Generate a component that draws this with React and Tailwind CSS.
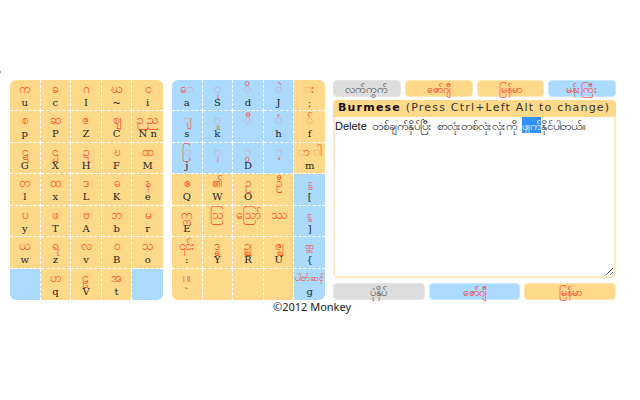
const amber = 'bg-[#ffd98a]'
const blue = 'bg-[#aadbff]'

const leftKeys = [
    ['က', 'u'], ['ခ', 'c'], ['ဂ', 'I'], ['ဃ', '~'], ['င', 'i'],
    ['စ', 'p'], ['ဆ', 'P'], ['ဇ', 'Z'], ['ဈ', 'C'], ['ဉ ည', 'N n'],
    ['ဋ', 'G'], ['ဌ', 'X'], ['ဍ', 'H'], ['ဎ', 'F'], ['ဏ', 'M'],
    ['တ', 'l'], ['ထ', 'x'], ['ဒ', 'L'], ['ဓ', 'K'], ['န', 'e'],
    ['ပ', 'y'], ['ဖ', 'T'], ['ဗ', 'A'], ['ဘ', 'b'], ['မ', 'r'],
    ['ယ', 'w'], ['ရ', 'z'], ['လ', 'v'], ['ဝ', 'B'], ['သ', 'o'],
    ['', '', blue], ['ဟ', 'q'], ['ဠ', 'V'], ['အ', 't'], ['', '', blue],
]

const rightKeys = [
    ['ေ', 'a', blue], ['ု', 'S', blue], ['ိ', 'd', blue], ['ဲ', 'J', blue], ['း', ';'],
    ['ျ', 's', blue], ['ူ', 'k', blue], ['ီ', '', blue], ['ံ', 'h', blue], ['်', 'f'],
    ['ြ', 'j', blue], ['ှ', '', blue], ['ွ', 'D', blue], ['့', '', blue], ['ာ ါ', 'm'],
    ['ဧ', 'Q'], ['၏', 'W'], ['ဥ', 'O'], ['ဦ', ''], ['ဋ္ဌ', '[', blue],
    ['ဣ', 'E'], ['ဩ', ''], ['ဪ', ''], ['ဿ', ''], ['ဋ္ဋ', ']', blue],
    ['၎င်း', ':'], ['ဒ္ဓ', 'Y'], ['ဉ္ဈ', 'R'], ['ဇ္ဈ', 'U'], ['ဏ္ဏ', '{', blue],
    ['၊ ။', '`'], ['', ''], ['', ''], ['', ''], ['ပါတ်ဆင့်', 'g', blue],
]

const Keyboard = ({ keys }) => (
    <div className="grid w-[153px] h-[220px] grid-cols-5 grid-rows-7 rounded-[6px] overflow-hidden">
        {keys.map(([top, bottom, bg], i) => (
            <div
                key={i}
                className={`${bg || amber} flex flex-col items-center pt-[1px] border-white border-dashed ${i % 5 < 4 ? 'border-r' : ''} ${i < 30 ? 'border-b' : ''}`}
            >
                <span className={`h-[16px] leading-[16px] whitespace-nowrap text-[#ff3a1c] ${top.length > 6 ? 'text-[9px]' : top.length === 3 && bg ? 'text-[9px]' : 'text-[12px]'}`}>{top}</span>
                <span className="h-[12px] leading-[12px] whitespace-pre text-[10px] text-[#222] font-['DejaVu_Serif',serif]">{bottom}</span>
            </div>
        ))}
    </div>
)

const Button = ({ bg, children, color = 'text-[#ff2a1c]', border = 'border-[#ffe6ae]' }) => (
    <div className={`${bg} ${color} ${border} flex-1 h-[17px] border rounded-[4px] flex items-center justify-center text-[11px] leading-none`}>
        {children}
    </div>
)

export default function App() {
    return (
        <div className="relative w-[640px] h-[400px] bg-white pt-[80px] pl-[10px] font-['Noto_Sans',sans-serif]">
            <div className="absolute left-0 top-[71px] w-px h-[2px] bg-gray-400" />
            <div className="flex items-start">
                <Keyboard keys={leftKeys} />
                <div className="ml-[9px]">
                    <Keyboard keys={rightKeys} />
                </div>
                <div className="ml-[8px] w-[283px] h-[220px] flex flex-col">
                    <div className="flex gap-[4px]">
                        <Button bg="bg-[#dddddd]" color="text-[#444]" border="border-[#e4e4e4]">လက်ကွက်</Button>
                        <Button bg={amber}>ဇော်ဂျီ</Button>
                        <Button bg={amber}>မြန်မာ</Button>
                        <Button bg={blue} border="border-[#c4e6ff]">မန်းကြီး</Button>
                    </div>
                    <div className={`${amber} mt-[3px] h-[17px] rounded-t-[4px] px-[5px] flex items-center text-[11px] tracking-[1.2px] text-[#333] font-['DejaVu_Sans',sans-serif] whitespace-nowrap`}>
                        <b className="text-[#111]">Burmese</b>&nbsp;(Press Ctrl+Left Alt to change)
                    </div>
                    <div className="h-[161px] border-2 border-t-0 border-[#ffecc0] rounded-b-[5px] resize overflow-auto text-[11.85px] leading-[16px] text-[#111] whitespace-nowrap [word-spacing:2px]">
                        <span className="text-[11px] font-['Liberation_Sans',sans-serif]">Delete</span> တစ်ချက်နှိပ်ပြီး စာလုံးတစ်လုံးလုံးကို <span className="bg-[#3390ff] text-white">ဖျက်</span>နိုင်ပါတယ်။
                    </div>
                    <div className="mt-[5px] flex gap-[4px]">
                        <Button bg="bg-[#dddddd]" color="text-[#444]" border="border-[#e4e4e4]">ပုံနှိပ်</Button>
                        <Button bg={blue} border="border-[#c4e6ff]">ဇော်ဂျီ</Button>
                        <Button bg={amber}>မြန်မာ</Button>
                    </div>
                </div>
            </div>
            <p className="ml-[263px] mt-[0px] text-[11px] leading-[14px] text-[#222]">©2012 Monkey</p>
        </div>
    )
}
